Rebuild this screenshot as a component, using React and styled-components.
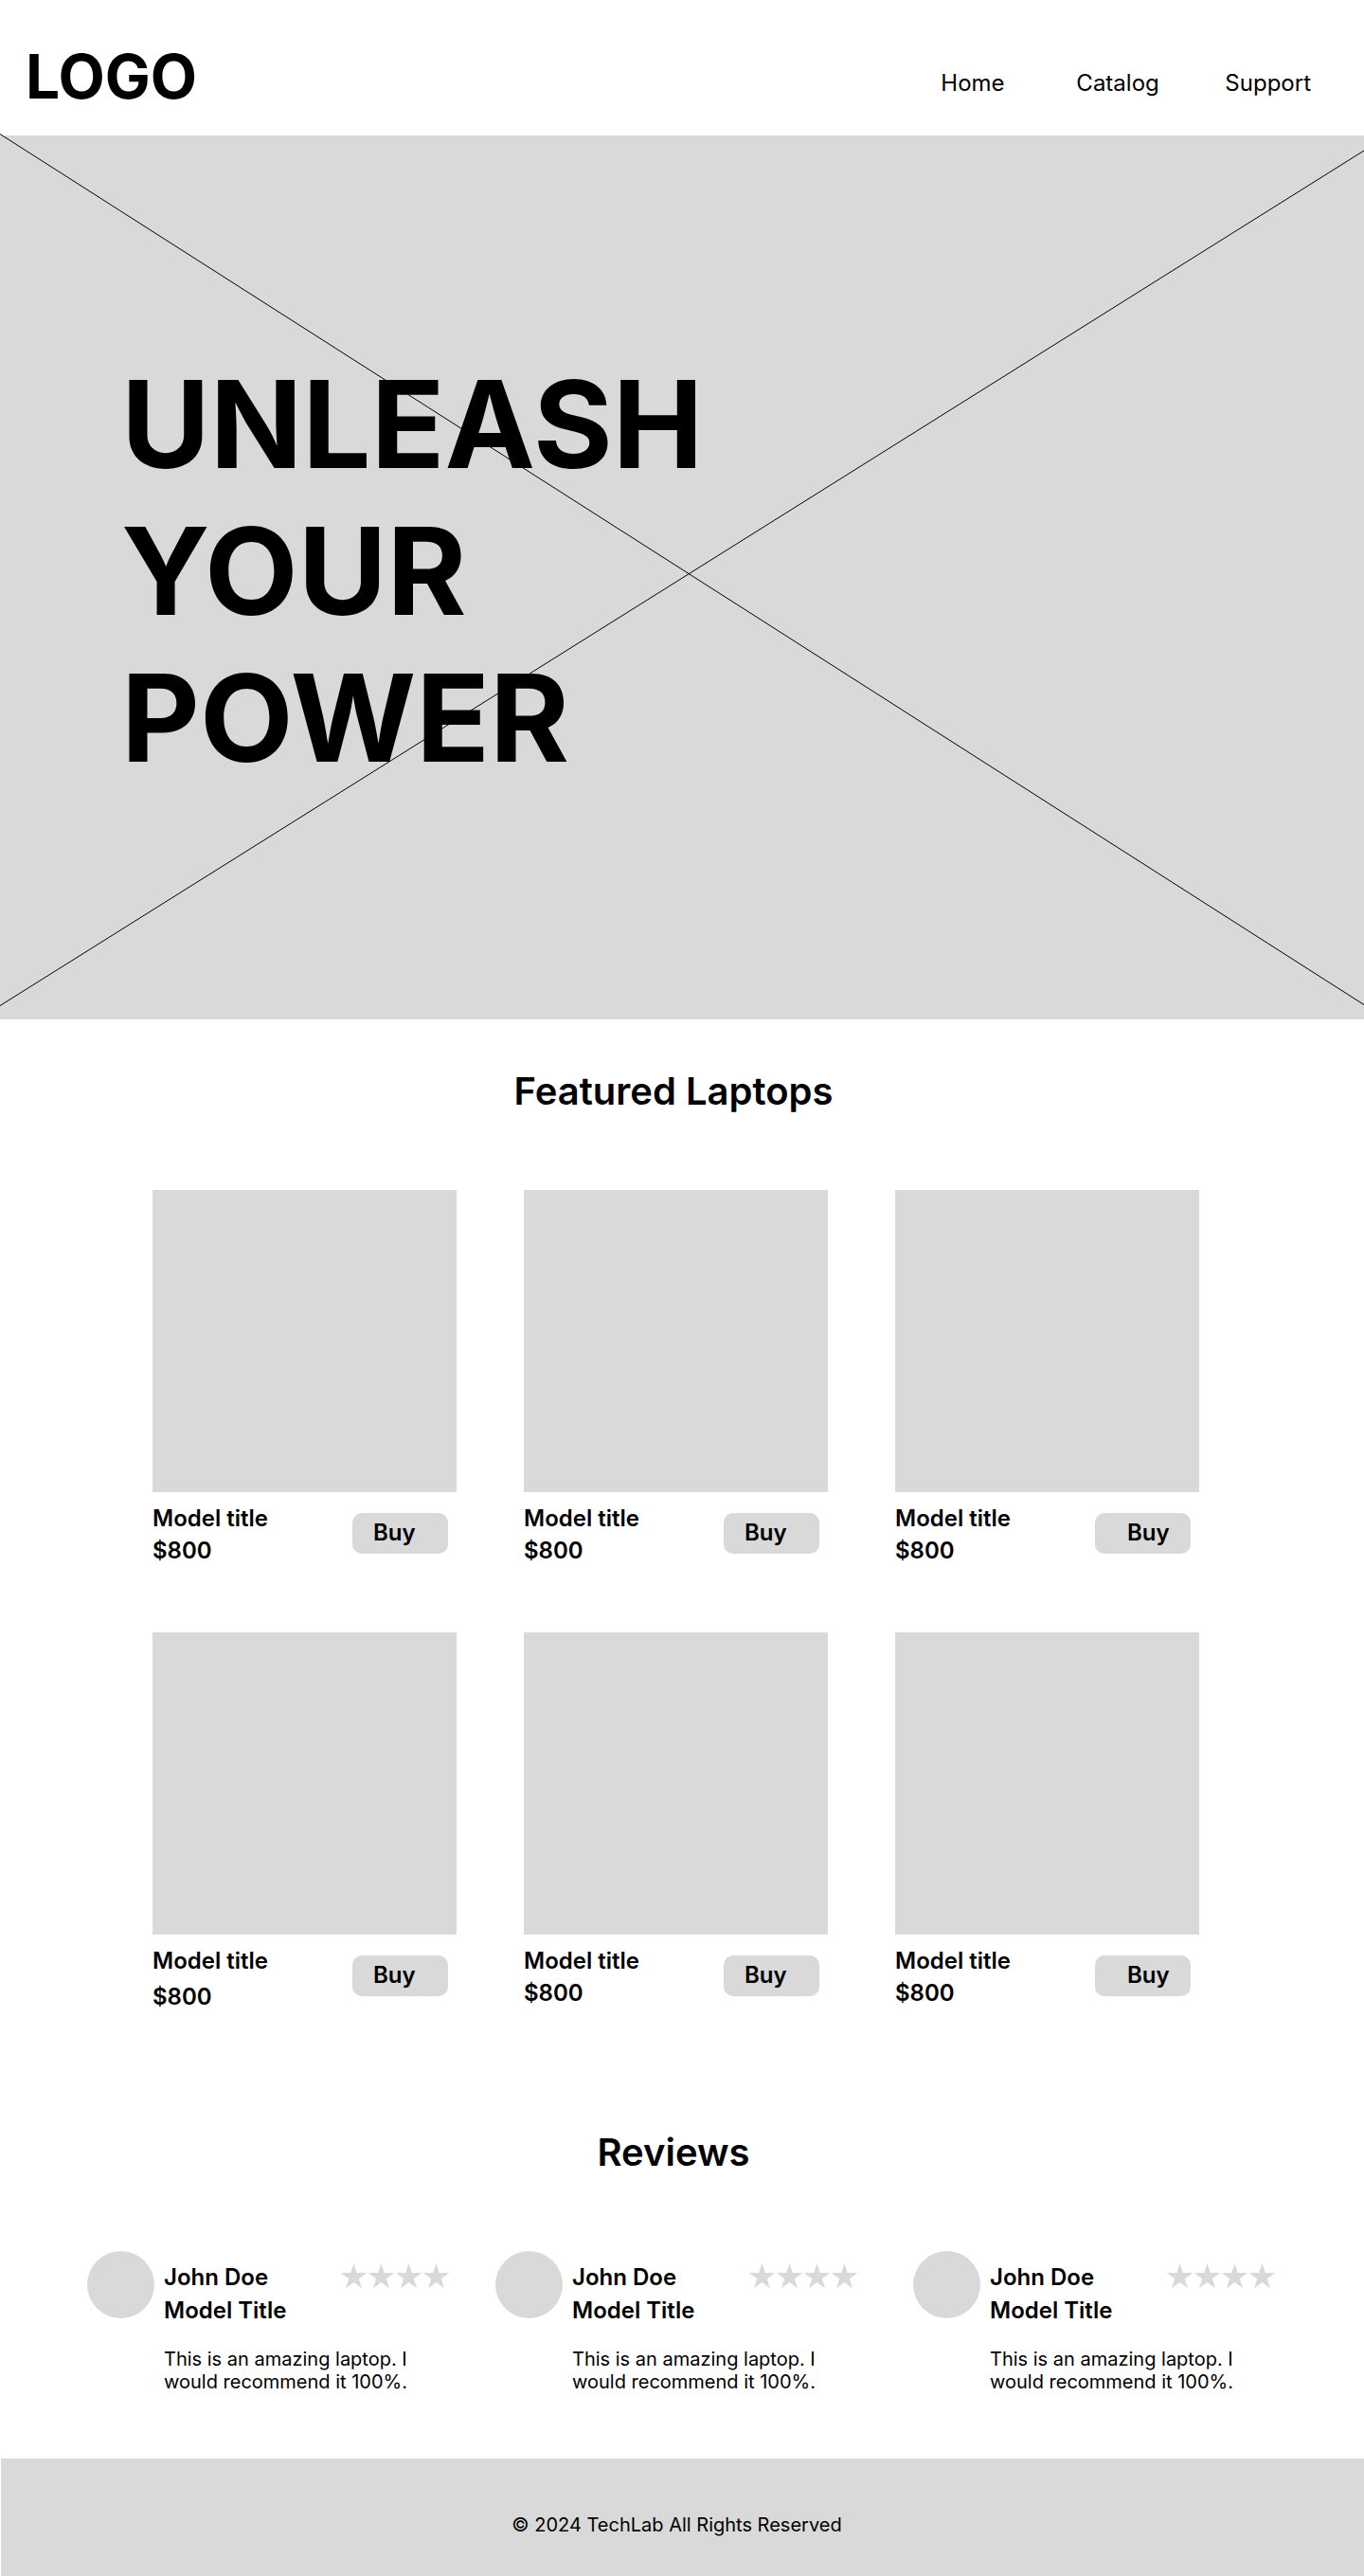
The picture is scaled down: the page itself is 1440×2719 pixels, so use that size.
import React from "react";
import styled, { createGlobalStyle } from "styled-components";

const GlobalStyle = createGlobalStyle`
  *, *::before, *::after { box-sizing: border-box; }
  body {
    margin: 0;
    background: #fff;
    color: #000;
    font-family: Inter, "Liberation Sans", sans-serif;
  }
  h1, h2, h3, p { margin: 0; }
`;

const GREY = "#d9d9d9";

const Header = styled.header`
  display: flex;
  justify-content: space-between;
  align-items: flex-start;
  padding: 42px 56px 24px 27px;
`;

const Logo = styled.a`
  color: inherit;
  text-decoration: none;
  font-size: 64px;
  line-height: 77px;
  font-weight: 700;
`;

const Nav = styled.nav`
  display: grid;
  grid-template-columns: 143px 157px auto;
  padding-top: 31px;
`;

const NavLink = styled.a`
  color: inherit;
  text-decoration: none;
  font-size: 24px;
  line-height: 29px;
`;

const Hero = styled.section`
  position: relative;
  padding: 227px 128px 241px;
  background: ${GREY};
`;

const HeroCross = styled.svg`
  position: absolute;
  inset: 0;
  width: 100%;
  height: 100%;
  overflow: visible;
  pointer-events: none;
`;

const HeroTitle = styled.h1`
  position: relative;
  max-width: 660px;
  font-size: 128px;
  line-height: 155px;
  font-weight: 700;
`;

const Section = styled.section`
  padding-top: ${(p) => p.$top}px;
`;

const SectionTitle = styled.h2`
  margin-bottom: 80px;
  padding-right: 18px;
  text-align: center;
  font-size: 40px;
  line-height: 48px;
  font-weight: 600;
`;

const ProductGrid = styled.div`
  display: grid;
  grid-template-columns: repeat(3, 1fr);
  gap: 72px 71px;
  padding: 0 174px 0 161px;
`;

const ProductImage = styled.div`
  height: 319px;
  background: ${GREY};
`;

const ProductInfo = styled.div`
  display: flex;
  justify-content: space-between;
  align-items: flex-start;
  padding: 13px 9px 0 0;
`;

const ProductText = styled.div`
  display: flex;
  flex-direction: column;
  gap: ${(p) => (p.$loose ? 9 : 5)}px;
`;

const ItemTitle = styled.h3`
  font-size: 24px;
  line-height: 29px;
  font-weight: 600;
`;

const Price = styled.p`
  font-size: 24px;
  line-height: 29px;
  font-weight: 600;
`;

const BuyButton = styled.button`
  width: 101px;
  margin-top: 9px;
  padding: 6px 0 8px ${(p) => (p.$indent ? 34 : 22)}px;
  border: 0;
  border-radius: 10px;
  background: ${GREY};
  color: inherit;
  font-family: inherit;
  font-size: 24px;
  line-height: 29px;
  font-weight: 600;
  text-align: left;
  cursor: pointer;
`;

const ReviewGrid = styled.div`
  display: grid;
  grid-template-columns: 431fr 441fr 383fr;
  padding: 0 93px 69px 92px;
`;

const ReviewCard = styled.article`
  display: flex;
  gap: 10px;
  align-items: flex-start;
  max-width: 383px;
`;

const Avatar = styled.div`
  flex: none;
  width: 71px;
  height: 71px;
  border-radius: 50%;
  background: ${GREY};
`;

const ReviewBody = styled.div`
  flex: 1;
  padding-top: 13px;
`;

const ReviewHead = styled.div`
  display: flex;
  justify-content: space-between;
  margin-bottom: 6px;
`;

const Stars = styled.div`
  display: flex;
  height: 29px;
`;

const ReviewText = styled.p`
  max-width: 270px;
  margin-top: 25px;
  font-size: 20px;
  line-height: 24px;
`;

const Footer = styled.footer`
  margin-left: 1px;
  padding: 58px 12px 42px 0;
  background: ${GREY};
  text-align: center;
  font-size: 20px;
  line-height: 24px;
`;

const starPoints = Array.from({ length: 10 }, (_, i) => {
  const radius = i % 2 ? 5.54 : 14.5;
  const angle = (Math.PI / 5) * i;
  return `${(14.5 + radius * Math.sin(angle)).toFixed(2)},${(14.5 - radius * Math.cos(angle)).toFixed(2)}`;
}).join(" ");

const Star = () => (
  <svg width="29" height="29" viewBox="0 0 29 29" aria-hidden="true">
    <polygon points={starPoints} fill={GREY} />
  </svg>
);

const products = [
  { id: 1 },
  { id: 2 },
  { id: 3, indent: true },
  { id: 4, loose: true },
  { id: 5 },
  { id: 6, indent: true },
];

const Product = ({ indent, loose }) => (
  <article>
    <ProductImage />
    <ProductInfo>
      <ProductText $loose={loose}>
        <ItemTitle>Model title</ItemTitle>
        <Price>$800</Price>
      </ProductText>
      <BuyButton type="button" $indent={indent}>Buy</BuyButton>
    </ProductInfo>
  </article>
);

const Review = () => (
  <ReviewCard>
    <Avatar />
    <ReviewBody>
      <ReviewHead>
        <ItemTitle>John Doe</ItemTitle>
        <Stars role="img" aria-label="4 stars">
          <Star /><Star /><Star /><Star />
        </Stars>
      </ReviewHead>
      <ItemTitle as="p">Model Title</ItemTitle>
      <ReviewText>This is an amazing laptop. I would recommend it 100%.</ReviewText>
    </ReviewBody>
  </ReviewCard>
);

export default function App() {
  return (
    <>
      <GlobalStyle />
      <Header>
        <Logo href="#">LOGO</Logo>
        <Nav>
          <NavLink href="#">Home</NavLink>
          <NavLink href="#catalog">Catalog</NavLink>
          <NavLink href="#support">Support</NavLink>
        </Nav>
      </Header>
      <main>
        <Hero>
          <HeroCross viewBox="0 0 1440 933" preserveAspectRatio="none" aria-hidden="true">
            <path
              d="M0 -1.5 L1440 917.5 M0 918.5 L1440 16"
              stroke="#000"
              fill="none"
              vectorEffect="non-scaling-stroke"
            />
          </HeroCross>
          <HeroTitle>
            UNLEASH
            <br />
            YOUR
            <br />
            POWER
          </HeroTitle>
        </Hero>
        <Section id="catalog" $top={52}>
          <SectionTitle>Featured Laptops</SectionTitle>
          <ProductGrid>
            {products.map((p) => (
              <Product key={p.id} indent={p.indent} loose={p.loose} />
            ))}
          </ProductGrid>
        </Section>
        <Section $top={126}>
          <SectionTitle>Reviews</SectionTitle>
          <ReviewGrid>
            <Review />
            <Review />
            <Review />
          </ReviewGrid>
        </Section>
      </main>
      <Footer id="support">© 2024 TechLab All Rights Reserved</Footer>
    </>
  );
}
